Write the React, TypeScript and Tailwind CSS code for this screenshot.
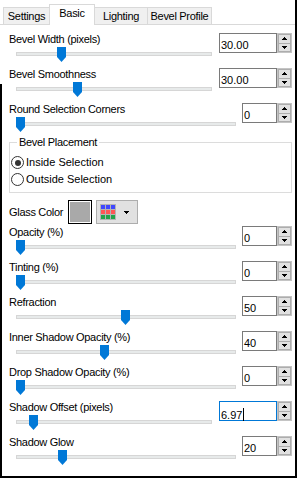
import React from "react";

type Row = {
  label: string;
  value: string;
  thumb: number;
  wide?: boolean;
  focused?: boolean;
};

const topRows: Row[] = [
  { label: "Bevel Width (pixels)", value: "30.00", thumb: 41, wide: true },
  { label: "Bevel Smoothness", value: "30.00", thumb: 57, wide: true },
  { label: "Round Selection Corners", value: "0", thumb: 0 },
];

const bottomRows: Row[] = [
  { label: "Opacity (%)", value: "0", thumb: 0 },
  { label: "Tinting (%)", value: "0", thumb: 0 },
  { label: "Refraction", value: "50", thumb: 105 },
  { label: "Inner Shadow Opacity (%)", value: "40", thumb: 84 },
  { label: "Drop Shadow Opacity (%)", value: "0", thumb: 0 },
  { label: "Shadow Offset (pixels)", value: "6.97", thumb: 13, wide: true, focused: true },
  { label: "Shadow Glow", value: "20", thumb: 42 },
];

function Arrow({ down }: { down?: boolean }) {
  return (
    <svg width="5" height="3" viewBox="0 0 5 3" shapeRendering="crispEdges" aria-hidden="true">
      <path d={down ? "M0 0H5V1H4V2H3V3H2V2H1V1H0Z" : "M2 0H3V1H4V2H5V3H0V2H1V1H2Z"} fill="#000" />
    </svg>
  );
}

function Spin() {
  return (
    <div className="flex h-[20px] w-[15px] flex-col border border-[#c4c4c4] bg-white">
      <div className="flex flex-1 items-center justify-center border border-[#adadad] bg-[#e1e1e1]">
        <Arrow />
      </div>
      <div className="flex flex-1 items-center justify-center border border-t-0 border-[#adadad] bg-[#e1e1e1]">
        <Arrow down />
      </div>
    </div>
  );
}

function NumBox({ value, wide, focused }: { value: string; wide?: boolean; focused?: boolean }) {
  return (
    <div className="mt-[1px] flex h-[20px]">
      <div
        className={
          (wide ? "w-[58px] " : "w-[35px] ") +
          (focused ? "border-[#0078d7] " : "border-[#7a7a7a] ") +
          "h-[20px] border bg-white pl-[1px] pt-[4px] leading-[14px] tracking-normal"
        }
      >
        <span>{value}</span>
        {focused && <span className="ml-[1px] inline-block h-[13px] w-px translate-y-[2px] bg-black align-baseline" />}
      </div>
      <Spin />
    </div>
  );
}

function Slider({ thumb }: { thumb: number }) {
  return (
    <div className="relative ml-[7px] h-[15px]">
      <div className="absolute left-0 right-0 top-[5px] h-[4px] border border-[#d6d6d6] bg-[#e7eaea]" />
      <svg className="absolute top-0" style={{ left: thumb }} width="9" height="15" viewBox="0 0 9 15" aria-hidden="true">
        <path d="M0 0H9V10L4.5 15L0 10Z" fill="#0078d7" />
      </svg>
    </div>
  );
}

function SliderRow({ row }: { row: Row }) {
  return (
    <div className="flex h-[30px]">
      <div className={(row.wide ? "mr-[7px] " : "mr-[6px] ") + "flex flex-1 flex-col"}>
        <div className="h-[15px] whitespace-nowrap">{row.label}</div>
        <Slider thumb={row.thumb} />
      </div>
      <NumBox value={row.value} wide={row.wide} focused={row.focused} />
    </div>
  );
}

function Radio({ checked, label }: { checked?: boolean; label: string }) {
  return (
    <div className="flex h-[17px] items-center">
      <span className="ml-[1px] flex h-[13px] w-[13px] items-center justify-center rounded-full border border-[#333] bg-white">
        {checked && <span className="h-[6px] w-[6px] rounded-full bg-[#333]" />}
      </span>
      <span className="ml-[2px] tracking-normal">{label}</span>
    </div>
  );
}

function ColorGrid() {
  const rows = ["#3f48ff", "#ff5555", "#23a34a"];
  return (
    <svg width="16" height="16" viewBox="0 0 16 16" shapeRendering="crispEdges" aria-hidden="true">
      <rect width="16" height="16" fill="#b4b4b4" />
      {rows.map((c, r) =>
        [0, 1, 2].map((col) => <rect key={`${r}-${col}`} x={1 + col * 5} y={1 + r * 5} width="4" height="4" fill={c} />)
      )}
    </svg>
  );
}

function Tab({ label, active, className }: { label: string; active?: boolean; className: string }) {
  return (
    <div
      className={
        className +
        (active
          ? " relative z-10 -mb-px h-[21px] bg-white pt-[1px]"
          : " h-[17px] bg-[#f0f0f0] pt-[1px]") +
        " border border-b-0 border-[#d9d9d9] text-center leading-[15px]"
      }
    >
      {label}
    </div>
  );
}

export default function App() {
  return (
    <div className="relative h-[478px] w-[297px] overflow-hidden border-b-2 border-r-2 border-black bg-white font-['Liberation_Sans',Arial,sans-serif] text-[11px] leading-[15px] tracking-[-0.3px] text-black">
      <div className="absolute bottom-0 left-0 top-[84px] w-[2px] bg-black" />

      <div className="flex h-[25px] items-end border-b border-[#d9d9d9] pl-[3px]">
        <Tab label="Settings" className="w-[47px]" />
        <Tab label="Basic" active className="-ml-px w-[46px]" />
        <Tab label="Lighting" className="-ml-px w-[54px]" />
        <Tab label="Bevel Profile" className="-ml-px w-[65px]" />
      </div>

      <div className="flex flex-col pl-[9px] pr-[3px] pt-[7px]">
        <div className="flex flex-col gap-[5px]">
          {topRows.map((r) => (
            <SliderRow key={r.label} row={r} />
          ))}
        </div>

        <div className="relative mt-[10px] border border-[#dcdcdc] pb-[4px] pt-[11px]">
          <span className="absolute left-[7px] top-[-8px] bg-white px-[2px]">Bevel Placement</span>
          <Radio checked label="Inside Selection" />
          <Radio label="Outside Selection" />
        </div>

        <div className="mt-[7px] flex h-[24px] items-center">
          <span className="w-[59px] whitespace-nowrap">Glass Color</span>
          <div className="h-[24px] w-[24px] border border-black bg-white p-px">
            <div className="h-full w-full bg-[#a9a9a9]" />
          </div>
          <div className="ml-[4px] flex h-[24px] w-[42px] items-center border border-[#adadad] bg-[#e1e1e1] pl-[3px]">
            <ColorGrid />
            <span className="ml-[8px] flex">
              <Arrow down />
            </span>
          </div>
        </div>

        <div className="mt-[1px] flex flex-col gap-[5px]">
          {bottomRows.map((r) => (
            <SliderRow key={r.label} row={r} />
          ))}
        </div>
      </div>
    </div>
  );
}
